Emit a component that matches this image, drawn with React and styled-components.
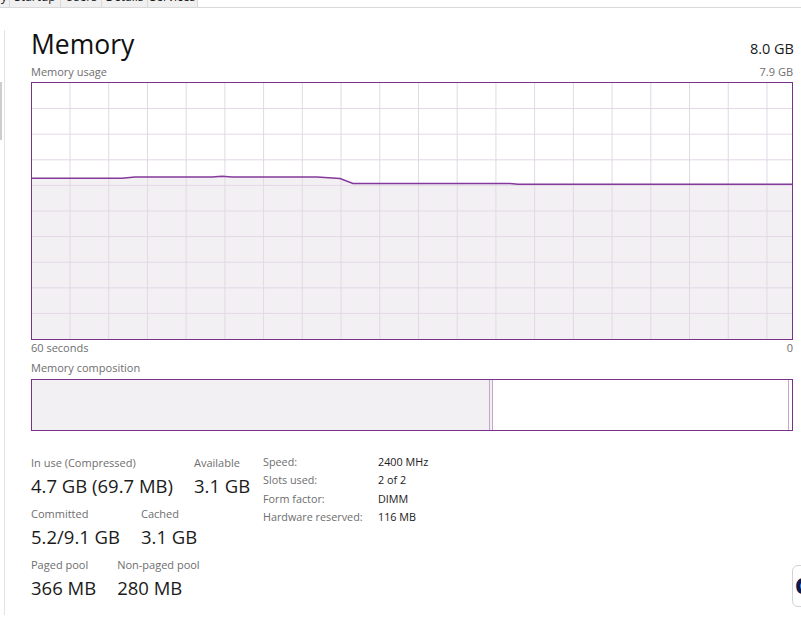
import React from "react"
import styled, { createGlobalStyle } from "styled-components"

const GRAPH_W = 760
const GRAPH_H = 256
const COL = 38.72
const ROW = 25.6

const usage = [
    [0, 95.3], [90, 95.3], [103, 94], [180, 94], [190, 93.3], [200, 94],
    [285, 94], [308, 95.5], [321, 100.5], [478, 100.5], [486, 101.3], [760, 101.3],
]

const tabs = [
    { label: "App history", width: 70, first: true },
    { label: "Startup", width: 51 },
    { label: "Users", width: 41 },
    { label: "Details", width: 46 },
    { label: "Services", width: 50 },
]

const leftStats = [
    [
        { label: "In use (Compressed)", value: "4.7 GB (69.7 MB)" },
        { label: "Available", value: "3.1 GB" },
    ],
    [
        { label: "Committed", value: "5.2/9.1 GB" },
        { label: "Cached", value: "3.1 GB" },
    ],
    [
        { label: "Paged pool", value: "366 MB" },
        { label: "Non-paged pool", value: "280 MB" },
    ],
]

const hardware = [
    ["Speed:", "2400 MHz"],
    ["Slots used:", "2 of 2"],
    ["Form factor:", "DIMM"],
    ["Hardware reserved:", "116 MB"],
]

class UsageGraph extends React.Component {
    render() {
        const line = usage.map(p => p.join(",")).join(" ")
        const area = `${line} ${GRAPH_W},${GRAPH_H} 0,${GRAPH_H}`
        const cols = Array.from({ length: 19 }, (_, i) => 38 + i * COL)
        const rows = Array.from({ length: 9 }, (_, i) => (i + 1) * ROW)

        return (
            <GraphBox>
                <svg width={GRAPH_W} height={GRAPH_H} viewBox={`0 0 ${GRAPH_W} ${GRAPH_H}`}>
                    <polygon points={area} fill="#f3f0f4" />
                    {cols.map(x => (
                        <line key={x} x1={x} x2={x} y1={0} y2={GRAPH_H} stroke="#e2d8e5" strokeWidth="1" />
                    ))}
                    {rows.map(y => (
                        <line key={y} x1={0} x2={GRAPH_W} y1={y} y2={y} stroke="#e2d8e5" strokeWidth="1" />
                    ))}
                    <polyline points={line} fill="none" stroke="#84399b" strokeWidth="1.4" />
                </svg>
            </GraphBox>
        )
    }
}

class App extends React.Component {
    render() {
        return (
            <Page>
                <GlobalStyle />
                <TabStrip>
                    {tabs.map(t => (
                        <Tab key={t.label} $width={t.width} $first={t.first}>{t.label}</Tab>
                    ))}
                </TabStrip>

                <Body>
                    <ScrollRail>
                        <Thumb />
                    </ScrollRail>

                    <Panel>
                        <Header>
                            <Title>Memory</Title>
                            <Total>8.0 GB</Total>
                        </Header>

                        <Caption $gap={8}>
                            <span>Memory usage</span>
                            <span>7.9 GB</span>
                        </Caption>

                        <UsageGraph />

                        <Caption $gap={1}>
                            <span>60 seconds</span>
                            <span>0</span>
                        </Caption>

                        <Caption $gap={6}>
                            <span>Memory composition</span>
                        </Caption>

                        <CompBar>
                            <Segment $width="457px" $fill="#f3f0f4" $divider />
                            <Segment $width="2px" $fill="#f3f0f4" $divider />
                            <Segment $grow $fill="#ffffff" />
                            <Segment $width="3px" $fill="#ffffff" $leftDivider />
                        </CompBar>

                        <Stats>
                            <StatColumn>
                                {leftStats.map((row, i) => (
                                    <StatRow key={i}>
                                        {row.map(s => (
                                            <Stat key={s.label}>
                                                <StatLabel>{s.label}</StatLabel>
                                                <StatValue>{s.value}</StatValue>
                                            </Stat>
                                        ))}
                                    </StatRow>
                                ))}
                            </StatColumn>

                            <HardwareTable>
                                {hardware.map(([k, v]) => (
                                    <HardwareRow key={k}>
                                        <HardwareKey>{k}</HardwareKey>
                                        <HardwareValue>{v}</HardwareValue>
                                    </HardwareRow>
                                ))}
                            </HardwareTable>
                        </Stats>
                    </Panel>
                </Body>

                <CornerWidget>
                    <CornerGlyph>C</CornerGlyph>
                </CornerWidget>
            </Page>
        )
    }
}

const GlobalStyle = createGlobalStyle`
    html, body {
        margin: 0;
        padding: 0;
        background: #ffffff;
        overflow: hidden;
    }
    body {
        font-family: "Open Sans", "Noto Sans", sans-serif;
        color: #1b1b1b;
    }
`
const Page = styled.div`
    position: relative;
    width: 801px;
    height: 626px;
    overflow: hidden;
    background: #ffffff;
`
const TabStrip = styled.div`
    display: flex;
    height: 21px;
    margin-top: -13px;
    border-bottom: 1px solid #d9d9d9;
    box-sizing: border-box;
`
const Tab = styled.div`
    flex: 0 0 ${p => p.$width}px;
    margin-left: ${p => (p.$first ? "-60px" : "0")};
    box-sizing: border-box;
    background: #f0f0f0;
    border-right: 1px solid #d9d9d9;
    font-size: 12px;
    line-height: 20px;
    color: #1b1b1b;
    white-space: nowrap;
    overflow: hidden;
    text-align: ${p => (p.$first ? "right" : "center")};
    padding-right: ${p => (p.$first ? "2px" : "0")};
`
const Body = styled.div`
    display: flex;
`
const ScrollRail = styled.div`
    flex: 0 0 4px;
`
const Thumb = styled.div`
    width: 2px;
    height: 58px;
    margin-top: 74px;
    background: #cdcdcd;
`
const Panel = styled.div`
    flex: 1;
    margin-top: 22px;
    height: 585px;
    border-left: 1px solid #e3e3e3;
    padding: 0 8px 0 26px;
    display: flex;
    flex-direction: column;
`
const Header = styled.div`
    display: flex;
    justify-content: space-between;
    align-items: baseline;
    margin-top: 1px;
    height: 26px;
`
const Title = styled.h1`
    margin: 0;
    font-size: 26.5px;
    font-weight: 400;
    line-height: 26px;
    color: #111111;
`
const Total = styled.div`
    font-size: 14.5px;
    line-height: 26px;
    color: #1b1b1b;
    margin-right: -1px;
`
const Caption = styled.div`
    display: flex;
    justify-content: space-between;
    margin-top: ${p => p.$gap}px;
    font-size: 11px;
    line-height: 14px;
    color: #6e6e6e;
`
const GraphBox = styled.div`
    margin-top: 3px;
    width: 762px;
    height: 258px;
    box-sizing: border-box;
    border: 1px solid #7a3189;
    display: flex;

    svg {
        display: block;
    }
`
const CompBar = styled.div`
    display: flex;
    margin-top: 4px;
    width: 762px;
    height: 52px;
    box-sizing: border-box;
    border: 1px solid #7a3189;
`
const Segment = styled.div`
    flex: ${p => (p.$grow ? "1" : `0 0 ${p.$width}`)};
    background: ${p => p.$fill};
    border-right: ${p => (p.$divider ? "1px solid #c3a6cc" : "none")};
    border-left: ${p => (p.$leftDivider ? "1px solid #c3a6cc" : "none")};
`
const Stats = styled.div`
    display: flex;
    align-items: flex-start;
    margin-top: 24px;
`
const StatColumn = styled.div`
    flex: 0 0 232px;
    display: flex;
    flex-direction: column;
    gap: 8px;
`
const StatRow = styled.div`
    display: flex;
    gap: 21px;
`
const Stat = styled.div`
    display: flex;
    flex-direction: column;
    gap: 4px;
    white-space: nowrap;
`
const StatLabel = styled.div`
    font-size: 11px;
    line-height: 15px;
    color: #6e6e6e;
`
const StatValue = styled.div`
    font-size: 18.5px;
    line-height: 24px;
    color: #1b1b1b;
`
const HardwareTable = styled.div`
    margin-top: -2px;
    display: flex;
    flex-direction: column;
`
const HardwareRow = styled.div`
    display: flex;
    font-size: 10.8px;
    line-height: 18.3px;
    white-space: nowrap;
`
const HardwareKey = styled.div`
    flex: 0 0 115px;
    color: #6e6e6e;
`
const HardwareValue = styled.div`
    color: #1b1b1b;
`
const CornerWidget = styled.div`
    position: absolute;
    left: 792px;
    top: 565px;
    width: 30px;
    height: 42px;
    box-sizing: border-box;
    border: 1px solid #cfd3d9;
    border-radius: 6px;
    background: #ffffff;
    overflow: hidden;
`
const CornerGlyph = styled.div`
    margin: 6px 0 0 2px;
    font-size: 22px;
    font-weight: 800;
    line-height: 26px;
    color: #0b1a4f;
`

export default App
